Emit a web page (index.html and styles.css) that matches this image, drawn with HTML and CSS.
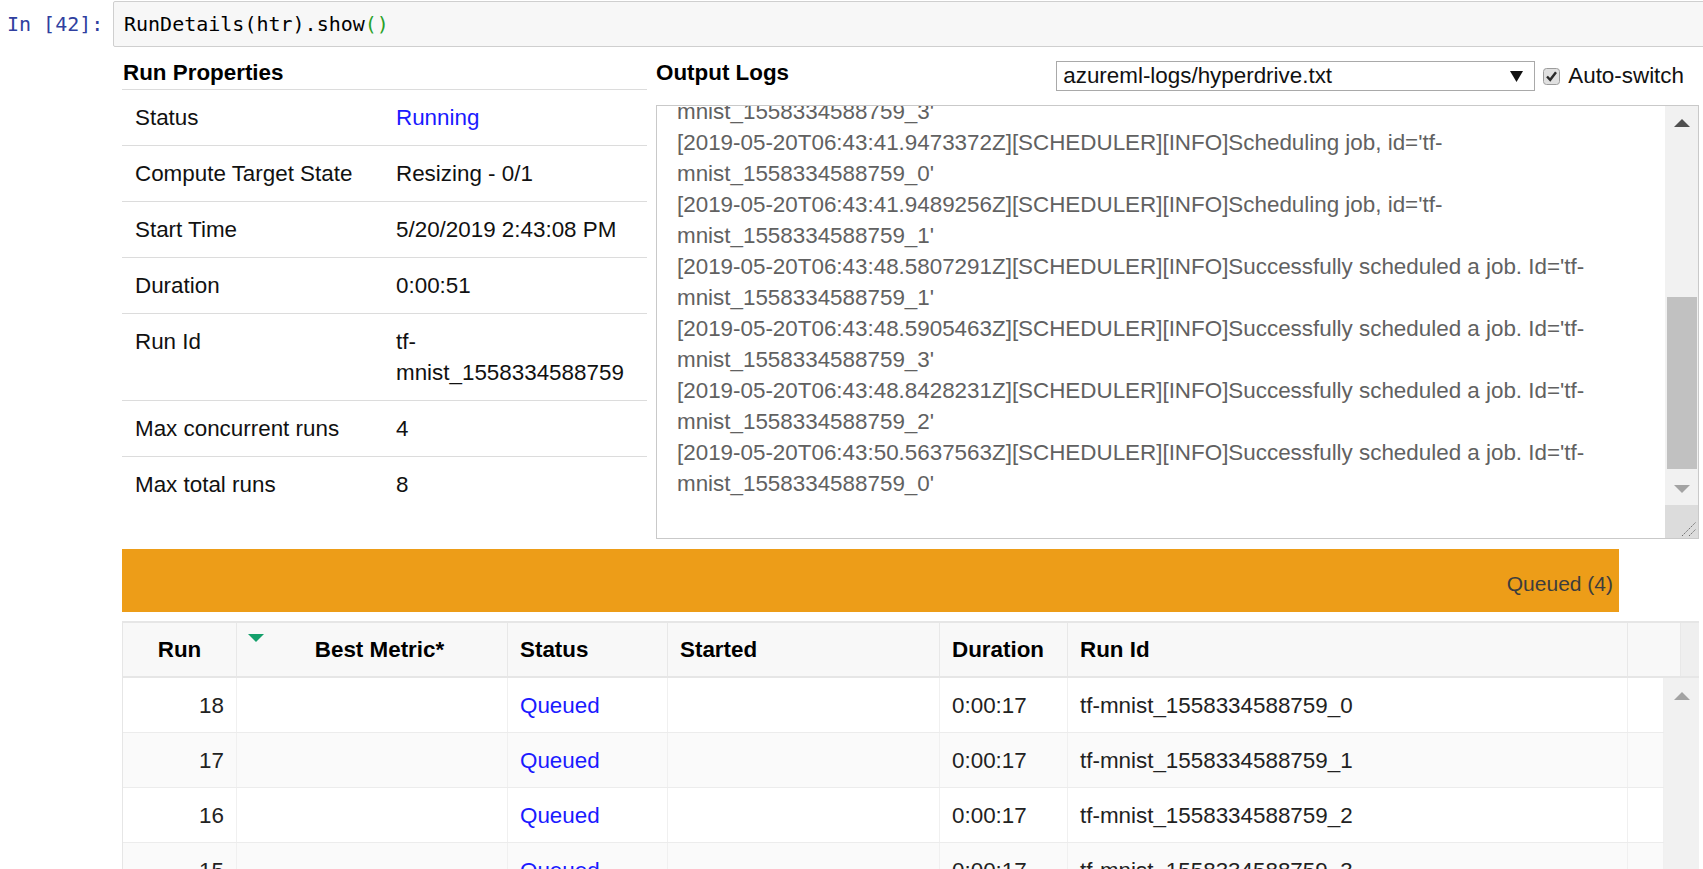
FILE: index.html
```html
<!DOCTYPE html>
<html>
<head>
<meta charset="utf-8">
<title>RunDetails</title>
<link rel="stylesheet" href="styles.css">
</head>
<body>
<div class="cell">
  <div class="prompt">In&nbsp;[42]:</div>
  <div class="input"><span class="code">RunDetails(htr).show<span class="paren">()</span></span></div>
</div>

<div class="widget">
  <div class="top">
    <div class="props">
      <div class="section-title props-title">Run Properties</div>
      <div class="prop-row"><div class="prop-key">Status</div><div class="prop-val link">Running</div></div>
      <div class="prop-row"><div class="prop-key">Compute Target State</div><div class="prop-val">Resizing - 0/1</div></div>
      <div class="prop-row"><div class="prop-key">Start Time</div><div class="prop-val">5/20/2019 2:43:08 PM</div></div>
      <div class="prop-row"><div class="prop-key">Duration</div><div class="prop-val">0:00:51</div></div>
      <div class="prop-row"><div class="prop-key">Run Id</div><div class="prop-val">tf-mnist_1558334588759</div></div>
      <div class="prop-row"><div class="prop-key">Max concurrent runs</div><div class="prop-val">4</div></div>
      <div class="prop-row"><div class="prop-key">Max total runs</div><div class="prop-val">8</div></div>
    </div>

    <div class="logs">
      <div class="logs-head">
        <div class="section-title logs-title">Output Logs</div>
        <div class="select">
          <span>azureml-logs/hyperdrive.txt</span>
          <svg class="caret" width="13" height="11" viewBox="0 0 13 11"><polygon points="0,0 13,0 6.5,11" fill="#111"/></svg>
        </div>
        <svg class="check" width="17" height="17" viewBox="0 0 17 17"><rect x="0.5" y="0.5" width="16" height="16" rx="3" fill="#e0e0e0" stroke="#9c9c9c"/><path d="M4 8.5 L7.2 11.8 L13 4.2" fill="none" stroke="#2a2a2a" stroke-width="2.4"/></svg>
        <span class="check-label">Auto-switch</span>
      </div>
      <div class="logbox">
        <div class="logview">
          <div class="logtext">
            <div class="ln">mnist_1558334588759_3'</div>
            <div class="ln">[2019-05-20T06:43:41.9473372Z][SCHEDULER][INFO]Scheduling job, id='tf-</div>
            <div class="ln">mnist_1558334588759_0'</div>
            <div class="ln">[2019-05-20T06:43:41.9489256Z][SCHEDULER][INFO]Scheduling job, id='tf-</div>
            <div class="ln">mnist_1558334588759_1'</div>
            <div class="ln">[2019-05-20T06:43:48.5807291Z][SCHEDULER][INFO]Successfully scheduled a job. Id='tf-</div>
            <div class="ln">mnist_1558334588759_1'</div>
            <div class="ln">[2019-05-20T06:43:48.5905463Z][SCHEDULER][INFO]Successfully scheduled a job. Id='tf-</div>
            <div class="ln">mnist_1558334588759_3'</div>
            <div class="ln">[2019-05-20T06:43:48.8428231Z][SCHEDULER][INFO]Successfully scheduled a job. Id='tf-</div>
            <div class="ln">mnist_1558334588759_2'</div>
            <div class="ln">[2019-05-20T06:43:50.5637563Z][SCHEDULER][INFO]Successfully scheduled a job. Id='tf-</div>
            <div class="ln">mnist_1558334588759_0'</div>
          </div>
        </div>
        <div class="vscroll">
          <div class="sb-btn"><svg width="16" height="8" viewBox="0 0 16 8"><polygon points="0,8 8,0 16,8" fill="#505050"/></svg></div>
          <div class="sb-track"><div class="sb-thumb"></div></div>
          <div class="sb-btn"><svg width="16" height="8" viewBox="0 0 16 8"><polygon points="0,0 16,0 8,8" fill="#a3a3a3"/></svg></div>
          <div class="resizer"><svg width="33" height="33" viewBox="0 0 33 33"><path d="M17 31 L31 17 M24 31 L31 24" stroke="#6a6a6a" stroke-width="1" stroke-dasharray="1.5 1"/></svg></div>
        </div>
      </div>
    </div>
  </div>

  <div class="progress"><span class="queued">Queued (4)</span></div>

  <div class="grid">
    <div class="grid-head">
      <div class="hc center">Run</div>
      <div class="hc center metric"><svg class="sort" width="16" height="8" viewBox="0 0 16 8"><polygon points="0,0 16,0 8,8" fill="#14a06b"/></svg>Best Metric*</div>
      <div class="hc">Status</div>
      <div class="hc">Started</div>
      <div class="hc">Duration</div>
      <div class="hc">Run Id</div>
      <div class="hc"></div>
      <div class="gutter"></div>
    </div>
    <div class="grid-body">
      <div class="rows">
        <div class="row"><div class="bc num">18</div><div class="bc"></div><div class="bc link">Queued</div><div class="bc"></div><div class="bc">0:00:17</div><div class="bc">tf-mnist_1558334588759_0</div><div class="bc"></div></div>
        <div class="row"><div class="bc num">17</div><div class="bc"></div><div class="bc link">Queued</div><div class="bc"></div><div class="bc">0:00:17</div><div class="bc">tf-mnist_1558334588759_1</div><div class="bc"></div></div>
        <div class="row"><div class="bc num">16</div><div class="bc"></div><div class="bc link">Queued</div><div class="bc"></div><div class="bc">0:00:17</div><div class="bc">tf-mnist_1558334588759_2</div><div class="bc"></div></div>
        <div class="row"><div class="bc num">15</div><div class="bc"></div><div class="bc link">Queued</div><div class="bc"></div><div class="bc">0:00:17</div><div class="bc">tf-mnist_1558334588759_3</div><div class="bc"></div></div>
      </div>
      <div class="tscroll">
        <div class="tsb-btn"><svg width="16" height="8" viewBox="0 0 16 8"><polygon points="0,8 8,0 16,8" fill="#a3a3a3"/></svg></div>
      </div>
    </div>
  </div>
</div>
</body>
</html>
```

FILE: styles.css
```css
html, body {
  margin: 0;
  padding: 0;
}

body {
  width: 1703px;
  height: 869px;
  overflow: hidden;
  background: #fff;
  font-family: "Liberation Sans", Arial, sans-serif;
  font-size: 22.4px;
  color: #111;
}

/* notebook cell */
.cell {
  display: flex;
  padding-top: 1px;
}

.prompt {
  width: 113px;
  flex: none;
  box-sizing: border-box;
  padding-left: 7px;
  font-family: "DejaVu Sans Mono", monospace;
  font-size: 20px;
  line-height: 46px;
  color: #303f9f;
  white-space: nowrap;
}

.input {
  flex: 1;
  margin-right: -20px;
  height: 46px;
  box-sizing: border-box;
  border: 1px solid #cfcfcf;
  border-radius: 2px;
  background: #f7f7f7;
  padding-left: 10px;
  font-family: "DejaVu Sans Mono", monospace;
  font-size: 20px;
  line-height: 44px;
  color: #000;
}

.paren {
  color: #27a127;
}

/* widget */
.widget {
  margin: 9px 4px 0 122px;
}

.top {
  display: flex;
  gap: 9px;
}

.section-title {
  font-weight: bold;
  line-height: 33px;
  color: #000;
}

.props {
  width: 525px;
  flex: none;
}

.props-title {
  padding-left: 1px;
  border-bottom: 1px solid #dcdcdc;
}

.prop-row {
  display: grid;
  grid-template-columns: 274px 1fr;
  border-bottom: 1px solid #dcdcdc;
  line-height: 31px;
}

.prop-row:last-child {
  border-bottom: none;
}

.prop-key {
  padding: 12px 13px;
}

.prop-val {
  padding: 12px 13px 12px 0;
}

.link {
  color: #1a1aff;
}

/* logs */
.logs {
  flex: 1;
  min-width: 0;
}

.logs-head {
  display: flex;
  align-items: center;
  height: 40px;
  margin-bottom: 9px;
  padding-right: 15px;
}

.logs-title {
  align-self: flex-start;
}

.select {
  margin-left: auto;
  width: 479px;
  height: 30px;
  box-sizing: border-box;
  border: 1px solid #a9a9a9;
  display: flex;
  align-items: center;
  justify-content: space-between;
  padding: 0 11px 0 6px;
  line-height: 28px;
  color: #111;
}

.caret {
  display: block;
}

.check {
  margin-left: 8px;
  display: block;
  flex: none;
}

.check-label {
  margin-left: 8px;
  color: #111;
}

.logbox {
  height: 434px;
  box-sizing: border-box;
  border: 1px solid #c9c9c9;
  display: flex;
}

.logview {
  flex: 1;
  min-width: 0;
  overflow: hidden;
  padding-left: 20px;
  color: #616161;
  line-height: 31px;
}

.logtext {
  margin-top: -10px;
}

.ln {
  white-space: nowrap;
}

.vscroll {
  width: 33px;
  flex: none;
  background: #f1f1f1;
  display: flex;
  flex-direction: column;
}

.sb-btn {
  height: 33px;
  flex: none;
  display: flex;
  align-items: center;
  justify-content: center;
}

.sb-track {
  flex: 1;
  display: flex;
  flex-direction: column;
  justify-content: flex-end;
  padding: 0 1px 3px 2px;
}

.sb-thumb {
  height: 172px;
  background: #c1c1c1;
}

.resizer {
  height: 33px;
  flex: none;
  background: #dcdcdc;
}

.resizer svg {
  display: block;
}

/* progress bar */
.progress {
  margin-top: 10px;
  width: 1497px;
  height: 63px;
  box-sizing: border-box;
  background: #ed9d18;
  display: flex;
  align-items: center;
  justify-content: flex-end;
  padding: 6px 6px 0 0;
}

.queued {
  font-size: 21px;
  color: #3d3d3d;
}

/* run grid */
.grid {
  margin-top: 9px;
  border-top: 2px solid #e6e6e6;
  border-left: 1px solid #e6e6e6;
}

.grid-head {
  display: grid;
  grid-template-columns: 114px 271px 160px 272px 128px 560px 53px 1fr;
  background: #f8f8f8;
  border-bottom: 2px solid #e6e6e6;
  font-weight: bold;
  color: #000;
}

.hc {
  position: relative;
  padding: 11px 12px;
  line-height: 31px;
  border-right: 1px solid #e8e8e8;
  white-space: nowrap;
}

.center {
  text-align: center;
}

.metric {
  padding-left: 27px;
}

.sort {
  position: absolute;
  left: 11px;
  top: 11px;
}

.gutter {
  background: #efefef;
}

.grid-body {
  display: flex;
}

.rows {
  flex: 1;
}

.row {
  display: grid;
  grid-template-columns: 114px 271px 160px 272px 128px 560px 1fr;
  border-bottom: 1px solid #ececec;
  line-height: 31px;
}

.row:nth-child(even) {
  background: #fafafa;
}

.bc {
  padding: 11.5px 12px;
  border-right: 1px solid #f0f0f0;
  color: #222;
  white-space: nowrap;
}

.bc.link {
  color: #1a1aff;
}

.num {
  text-align: right;
}

.tscroll {
  width: 35px;
  flex: none;
  background: #f1f1f1;
}

.tsb-btn {
  height: 35px;
  display: flex;
  align-items: center;
  justify-content: center;
}
```
